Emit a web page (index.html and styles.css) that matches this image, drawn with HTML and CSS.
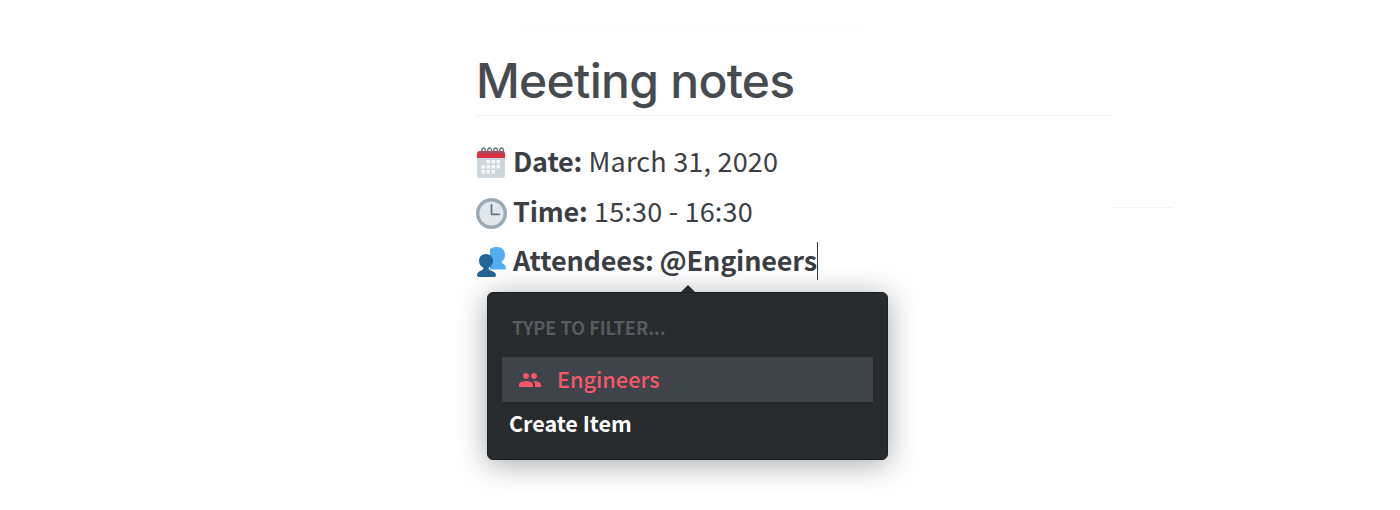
FILE: index.html
```html
<!DOCTYPE html>
<html lang="en">
<head>
<meta charset="utf-8">
<title>Meeting notes</title>
<link rel="stylesheet" href="styles.css">
</head>
<body>
<div class="rule-top"></div>
<div class="rule-side"></div>
<main class="doc">
  <h1 class="title">Meeting notes</h1>
  <p class="line">
    <svg class="emoji" viewBox="0 0 32 32"><path fill="#CCD6DD" d="M1 6h28v23a3 3 0 0 1-3 3H4a3 3 0 0 1-3-3z"/><path fill="#DD2E44" d="M4 5h22a3 3 0 0 1 3 3v4H1V8a3 3 0 0 1 3-3z"/><path fill="#F5F8FA" d="M10.500 14h3.500v3.500h-3.500zm5 0h3.500v3.500h-3.500zm5 0h3.500v3.500h-3.500zM5.500 19h3.500v3.500H5.500zm5 0h3.500v3.500h-3.500zm5 0h3.500v3.500h-3.500zm5 0h3.500v3.500h-3.500zM5.500 24h3.500v3.500H5.500zm5 0h3.500v3.500h-3.500zm5 0h3.500v3.500h-3.500z"/><path fill="none" stroke="#66757F" stroke-width="1.400" d="M7 8C5 6 5.500 2 7.500 2s2.500 3 1.500 5M13 8c-2-2-1.500-6 .5-6s2.500 3 1.500 5M19 8c-2-2-1.500-6 .5-6s2.500 3 1.500 5M25 8c-2-2-1.500-6 .5-6S28 5 27 7"/></svg>
    <span class="text"><strong>Date:</strong> March 31, 2020</span>
  </p>
  <p class="line">
    <svg class="emoji clock" viewBox="0 0 36 36"><circle fill="#99AAB5" cx="18" cy="18" r="18"/><circle fill="#E1E8ED" cx="18" cy="18" r="14"/><path fill="none" stroke="#66757F" stroke-width="2" stroke-linecap="round" stroke-linejoin="round" d="M18 8v11h9"/></svg>
    <span class="text"><strong>Time:</strong> 15:30 - 16:30</span>
  </p>
  <p class="line">
    <svg class="emoji" viewBox="0 0 32 32"><path fill="#55ACEE" d="M30 22c0 1-.7 1.500-1.500 1.500H14V3c2-1.500 4.500-2 7-2 4.500 0 8 3.200 8 8 0 2.700-1.200 5-3.200 6.300-.2 1 .2 1.900 1 2.400 1.500.9 3.200 2 3.200 4.300z"/><path fill="#269" d="M20 29c0 1-.7 2-1.700 2H3c-1 0-2-1-2-2 0-2.800 3.400-4 5.300-5 .9-.5 1.200-1.300 1-2.200C4.700 20.500 3 17.800 3 14.800 3 10.500 6.200 8 10 8s7 2.500 7 6.800c0 3-1.700 5.700-4.300 7-.2.900.1 1.700 1 2.200 1.900 1 6.300 2.200 6.300 5z"/></svg>
    <strong class="text text-bold">Attendees: @Engineers</strong><span class="caret"></span>
  </p>
  <section class="menu">
    <span class="arrow"></span>
    <div class="filter">TYPE TO FILTER...</div>
    <div class="item selected">
      <svg class="group" viewBox="0 0 24 24"><path fill="currentColor" d="M16 11c1.660 0 2.990-1.340 2.990-3S17.660 5 16 5c-1.660 0-3 1.340-3 3s1.340 3 3 3zm-8 0c1.660 0 2.990-1.340 2.990-3S9.660 5 8 5C6.340 5 5 6.340 5 8s1.340 3 3 3zm0 2c-2.330 0-7 1.170-7 3.500V19h14v-2.500c0-2.330-4.670-3.500-7-3.500zm8 0c-.29 0-.62.020-.97.050 1.160.84 1.970 1.970 1.970 3.450V19h6v-2.500c0-2.330-4.670-3.500-7-3.500z"/></svg>
      <span class="item-label">Engineers</span>
    </div>
    <div class="create">Create Item</div>
  </section>
</main>
</body>
</html>
```
FILE: styles.css
```css
html, body {
  margin: 0;
  height: 510px;
  overflow: hidden;
  background: #fff;
}
body {
  font-family: "Noto Sans CJK SC", "Noto Sans", sans-serif;
  color: #3b3f44;
  position: relative;
}
.rule-top {
  position: absolute;
  left: 520px;
  top: 26px;
  width: 350px;
  height: 1px;
  background: #fbfbfb;
}
.rule-side {
  position: absolute;
  left: 1112px;
  top: 207px;
  width: 60px;
  height: 1px;
  background: #f3f3f3;
}
.doc {
  position: relative;
  width: 636px;
  margin-left: 476px;
  padding-top: 50px;
}
.title {
  margin: 0 0 21px;
  height: 65px;
  line-height: 62px;
  font-family: Inter, sans-serif;
  font-size: 48px;
  letter-spacing: -.72px;
  font-weight: 450;
  color: #464b50;
  border-bottom: 1px solid #f1f3f5;
}
.line {
  display: flex;
  align-items: center;
  margin: 0;
  height: 50px;
  font-size: 27px;
}
.text {
  margin-top: -4px;
  margin-left: -2px;
  white-space: pre;
  letter-spacing: .2px;
}
.text-bold {
  margin-top: -6px;
}
.line strong {
  font-weight: 700;
  letter-spacing: -.17px;
}
.emoji {
  width: 32px;
  height: 32px;
  margin-right: 7px;
  flex: none;
}
.clock {
  width: 31px;
  height: 31px;
  margin-top: 2px;
  margin-right: 8px;
}
.caret {
  width: 1px;
  height: 38px;
  margin-top: -2px;
  background: #383c40;
}
.menu {
  position: absolute;
  left: 11px;
  top: 292px;
  box-sizing: border-box;
  width: 401px;
  height: 168px;
  padding: 15px 14px;
  background: #272b2e;
  border: 1px solid #1d2023;
  border-radius: 6px;
  box-shadow: 0 4px 30px rgba(0, 0, 0, .35);
}
.arrow {
  position: absolute;
  left: 193px;
  top: -8px;
  border: 7px solid transparent;
  border-top: 0;
  border-bottom: 7px solid #272b2e;
}
.filter {
  height: 49px;
  padding-left: 10px;
  line-height: 38px;
  font-size: 18px;
  color: #565b60;
  font-weight: 700;
}
.item {
  display: flex;
  align-items: center;
  height: 45px;
  background: #3e444a;
  color: #f9566a;
  font-size: 21.7px;
  font-weight: 500;
}
.item-label {
  margin-top: -3px;
}
.group {
  width: 24px;
  height: 24px;
  margin: 0 15px 0 16px;
}
.create {
  padding: 5px 7px;
  color: #fff;
  font-size: 21.5px;
  font-weight: 700;
  line-height: 32px;
}
```
